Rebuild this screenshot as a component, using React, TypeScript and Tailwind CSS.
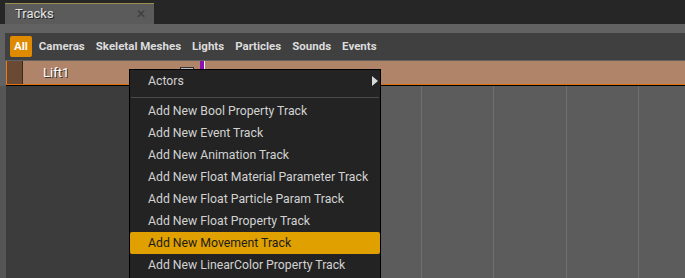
import { useState } from "react";

const filters = ["Cameras", "Skeletal Meshes", "Lights", "Particles", "Sounds", "Events"];

const items = [
  "Add New Bool Property Track",
  "Add New Event Track",
  "Add New Animation Track",
  "Add New Float Material Parameter Track",
  "Add New Float Particle Param Track",
  "Add New Float Property Track",
  "Add New Movement Track",
  "Add New LinearColor Property Track",
];

const ContextMenu = () => {
  const [hover, setHover] = useState("Add New Movement Track");

  return (
    <div className="absolute left-[129px] top-[69px] w-[252px] h-[230px] bg-[#232323] border border-black text-[12.25px]">
      <div className="flex items-center justify-between h-[22px] pl-[18px] pr-[2px] text-[#d2d2d2]">
        <span>Actors</span>
        <svg width="6" height="10" viewBox="0 0 6 10">
          <path d="M0 0 L6 5 L0 10 Z" fill="#d8d8d8" />
        </svg>
      </div>
      <div className="mx-[1px] mt-[5px] mb-[2px] h-px bg-[#4a4a4a]" />
      {items.map((item) => (
        <div
          key={item}
          onMouseEnter={() => setHover(item)}
          className={
            "flex items-center h-[22px] pl-[18px] rounded-[2px] " +
            (hover === item ? "bg-[#e0a000] text-[#1c1c1c]" : "text-[#d2d2d2]")
          }
        >
          {item}
        </div>
      ))}
    </div>
  );
};

export default function App() {
  return (
    <div
      className="relative w-[685px] h-[278px] overflow-hidden bg-[#262626] flex flex-col text-[12px]"
      style={{ fontFamily: "Roboto, 'Liberation Sans', sans-serif" }}
    >
      {/* tab strip */}
      <div className="h-[24px] pl-[5px] pt-[3px] flex">
        <div className="w-[149px] bg-[#5b5b5b] border-t border-[#9c8f4c] flex items-center justify-between pl-[10px] pr-[8px]">
          <span className="text-[13px] text-[#e4e4e4] [text-shadow:1px_1px_0_#222]">Tracks</span>
          <span className="text-[12px] text-[#3a3a3a]">✕</span>
        </div>
      </div>

      <div className="flex-1 bg-[#626262] flex flex-col pt-[9px]">
        {/* filter bar */}
        <div className="ml-[5px] h-[27px] bg-[#404040] flex items-center gap-[11px] pl-[5px] text-[11.5px]">
          <span className="h-[21px] px-[4px] mr-[-4px] flex items-center rounded-[2px] bg-[#e08a00] text-white font-bold">
            All
          </span>
          {filters.map((f) => (
            <span key={f} className="text-[#dcdcdc] font-bold">
              {f}
            </span>
          ))}
        </div>

        {/* track row */}
        <div className="mt-px ml-[6px] h-[24px] flex bg-[#b08468] border-l border-[#f07a10] border-b border-b-[#e0700c] shadow-[0_1px_0_#000] relative">
          <div className="w-[16px] bg-[#6a4a35] border-r border-[#3a2a1e]" />
          <span className="ml-[20px] self-center text-[13px] text-white [text-shadow:1px_1px_0_#333]">Lift1</span>
          <div className="absolute left-[173px] top-[6px] w-[14px] h-[3px] bg-[#bbbbbb] border border-[#333]" />
          <div className="absolute left-[193px] top-0 w-[5px] h-[10px] bg-[#8c0fb4] border-r border-white" />
        </div>

        {/* lower area */}
        <div className="flex-1 flex mt-px">
          <div className="w-[6px] bg-[#555555]" />
          <div className="w-[124px] bg-[#3c3c3c]" />
          <div className="flex-1 bg-[#5c5c5c] flex">
            <div className="w-[292px] border-r border-[#707070]" />
            <div className="w-[72px] border-r border-[#707070]" />
            <div className="w-[73px] border-r border-[#707070]" />
            <div className="w-[72px] border-r border-[#707070]" />
          </div>
        </div>
      </div>

      <ContextMenu />
    </div>
  );
}
